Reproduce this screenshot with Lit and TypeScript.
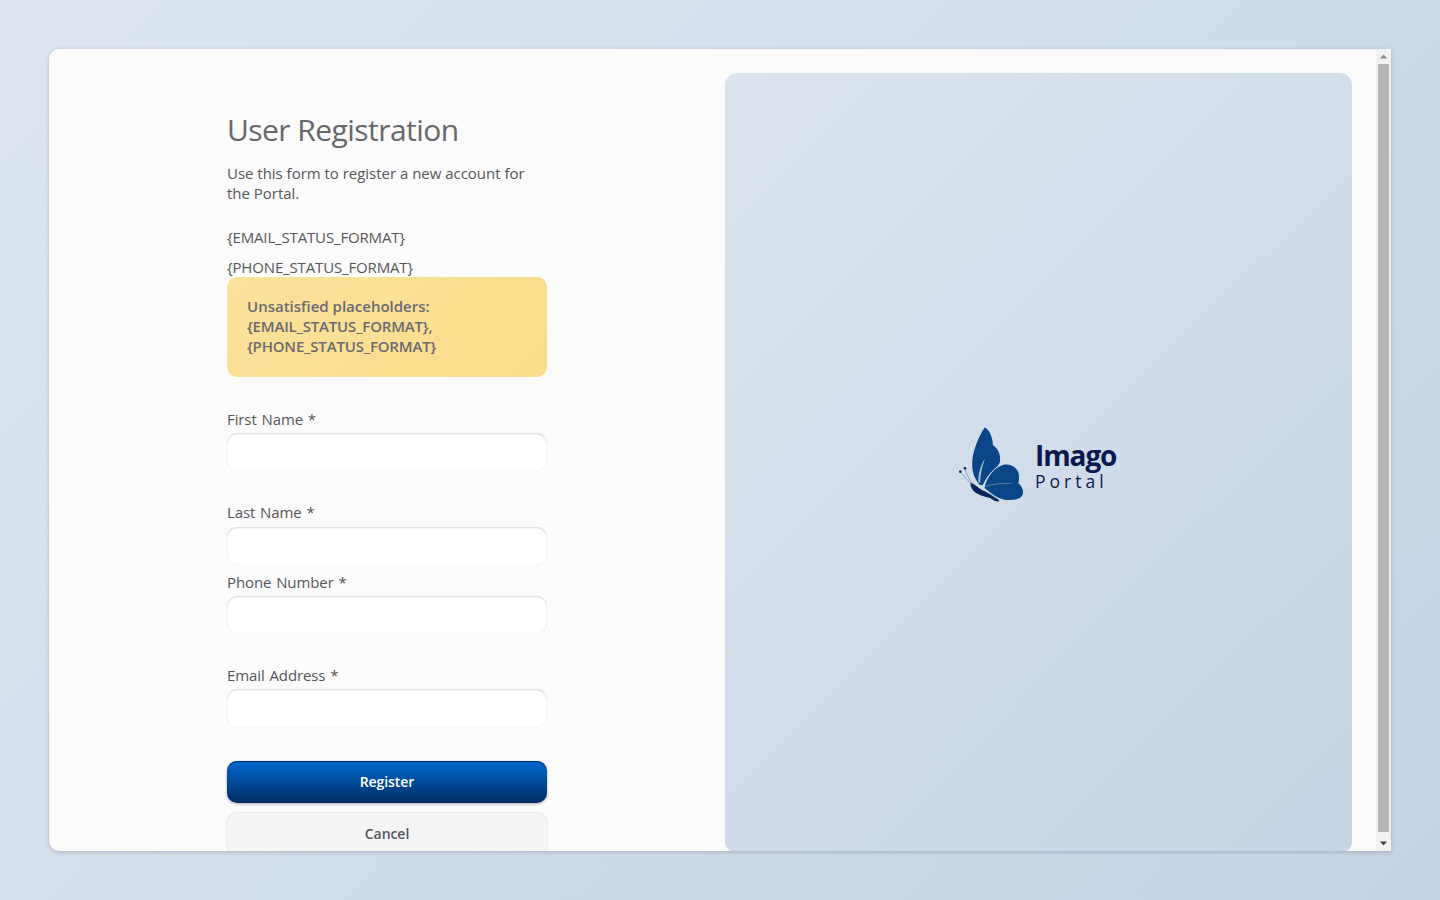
import { LitElement, html, css } from "lit";
import { customElement } from "lit/decorators.js";

@customElement("app-root")
export class AppRoot extends LitElement {
  static styles = css`
    :host {
      display: block;
      width: 1440px;
      height: 900px;
      overflow: hidden;
      font-family: "Open Sans", "Noto Sans", sans-serif;
      background: linear-gradient(135deg, #dde6ef 0%, #d0ddea 50%, #c5d4e5 100%);
      padding: 49px;
      box-sizing: border-box;
    }
    .card {
      height: 802px;
      width: 1342px;
      display: flex;
      background: #fbfbfb;
      border-radius: 10px 0 0 10px;
      box-shadow: 0 1px 4px rgba(60, 70, 90, 0.28);
      overflow: hidden;
    }
    .content {
      flex: 1;
      min-width: 0;
      display: flex;
      overflow: hidden;
    }
    .left {
      width: 676px;
      flex: none;
      padding: 60px 0 0 178px;
      box-sizing: border-box;
    }
    .form {
      width: 320px;
      display: flex;
      flex-direction: column;
    }
    h1 {
      margin: 0;
      font-size: 30px;
      line-height: 42px;
      font-weight: 400;
      letter-spacing: -0.55px;
      color: #66676b;
    }
    .intro {
      margin: 12px 0 0;
      font-size: 15px;
      line-height: 20px;
      letter-spacing: -0.02px;
      color: #55565a;
    }
    .status {
      font-size: 15px;
      line-height: 20px;
      letter-spacing: -0.15px;
      color: #55565a;
      margin: 24px 0 0;
    }
    .status + .status {
      margin-top: 10px;
    }
    .alert {
      height: 100px;
      box-sizing: border-box;
      padding: 19px 20px 21px;
      border-radius: 10px;
      background: linear-gradient(135deg, #fae29b 0%, #fadd8a 100%);
      font-size: 15px;
      line-height: 20px;
      font-weight: 600;
      color: #6b6a72;
    }
    .ph {
      letter-spacing: -0.18px;
    }
    .field {
      display: flex;
      flex-direction: column;
    }
    .field label {
      font-size: 15px;
      line-height: 20px;
      letter-spacing: -0.1px;
      word-spacing: 1px;
      color: #55565a;
    }
    .field .box {
      margin-top: 4px;
      height: 37px;
      box-sizing: border-box;
      background: #fff;
      border-radius: 10px;
      box-shadow: inset 0 1px 2px rgba(0, 0, 0, 0.16), 0 0 1px rgba(0, 0, 0, 0.1);
      border: none;
      padding: 0 12px;
      font: inherit;
    }
    .first { margin-top: 32px; }
    .last { margin-top: 32px; }
    .last .box { margin-top: 5px; }
    .phone { margin-top: 8px; }
    .email { margin-top: 32px; }
    .email .box { height: 38px; }
    button {
      display: block;
      width: 320px;
      border: none;
      border-radius: 10px;
      font-family: inherit;
      font-size: 14px;
      font-weight: 600;
      flex: none;
      padding: 0 0 2px;
    }
    .register {
      margin-top: 34px;
      height: 42px;
      color: #fff;
      letter-spacing: -0.05px;
      background: linear-gradient(180deg, #0068cf 0%, #004a99 50%, #002d62 100%);
      box-shadow: inset 0 1px 0 rgba(0, 30, 80, 0.8), 0 1px 3px rgba(0, 0, 0, 0.3);
    }
    .cancel {
      margin-top: 10px;
      height: 42px;
      color: #55565a;
      letter-spacing: -0.05px;
      background: #f4f4f4;
      box-shadow: 0 0 2px rgba(0, 0, 0, 0.24);
    }
    .panel {
      width: 627px;
      height: 780px;
      flex: none;
      margin-top: 24px;
      border-radius: 12px;
      background: linear-gradient(135deg, #dbe4ee 0%, #c6d5e5 100%);
      display: flex;
      align-items: center;
      justify-content: center;
    }
    .logo {
      display: flex;
      align-items: center;
      gap: 9px;
      margin-top: 4px;
    }
    .logo svg {
      display: block;
      width: 68px;
      height: 78px;
    }
    .logo-text {
      display: flex;
      flex-direction: column;
      width: 84px;
      margin-top: 1px;
    }
    .imago {
      font-size: 28px;
      line-height: 30px;
      margin-top: 3px;
      font-weight: 700;
      letter-spacing: -1.1px;
      color: #0a1a4c;
    }
    .portal {
      font-size: 17.5px;
      line-height: 25px;
      margin-top: -1.5px;
      font-weight: 500;
      letter-spacing: 4px;
      color: #0a1a4c;
    }
    .scrollbar {
      width: 15px;
      flex: none;
      display: flex;
      flex-direction: column;
      align-items: center;
      background: #f1f1f1;
    }
    .arrow {
      width: 15px;
      height: 15px;
      flex: none;
      display: block;
    }
    .thumb {
      width: 11px;
      height: 768px;
      margin-bottom: 2px;
      background: #b6b6b6;
      flex: none;
    }
    .spacer { flex: 1; }
  `;

  render() {
    return html`
      <div class="card">
        <div class="content">
          <div class="left">
            <div class="form">
              <h1>User Registration</h1>
              <p class="intro">Use this form to register a new account for the Portal.</p>
              <div class="status">{EMAIL_STATUS_FORMAT}</div>
              <div class="status">{PHONE_STATUS_FORMAT}</div>
              <div class="alert">Unsatisfied placeholders: <span class="ph">{EMAIL_STATUS_FORMAT},</span> <span class="ph">{PHONE_STATUS_FORMAT}</span></div>
              <div class="field first"><label>First Name *</label><input class="box" /></div>
              <div class="field last"><label>Last Name *</label><input class="box" /></div>
              <div class="field phone"><label>Phone Number *</label><input class="box" /></div>
              <div class="field email"><label>Email Address *</label><input class="box" /></div>
              <button class="register">Register</button>
              <button class="cancel">Cancel</button>
            </div>
          </div>
          <div class="panel">
            <div class="logo">
              <svg viewBox="24 18 204 234" aria-hidden="true">
                <path fill="#0a4587" d="M88 194C70 172 63 146 68 112C73 82 88 45 105 22C119 32 128 52 129 76C144 86 153 104 150 124C148 136 140 141 130 150C116 162 106 178 98 196Z" />
                <path fill="#0a4587" d="M104 200C112 172 130 144 158 135C182 130 200 142 206 160C208 172 207 184 205 190C216 198 222 212 218 224C212 238 192 240 172 240C150 238 134 230 104 204Z" />
                <path fill="#a9bfd8" d="M85 186C85 160 91 136 105 116C96 140 91 164 90 190Z" />
                <path fill="none" stroke="#a9bfd8" stroke-width="1.4" stroke-linecap="round" d="M106 199C130 192 158 189 184 190" />
                <path fill="#0a2657" d="M62 188C72 190 84 202 96 210C110 216 124 224 134 232C142 236 148 240 148 244C140 246 128 240 120 234C106 230 82 224 70 212C64 204 60 196 62 188Z" />
                <path fill="none" stroke="#5a7398" stroke-width="1.6" d="M66 194C56 186 44 170 32 157" />
                <path fill="none" stroke="#5a7398" stroke-width="1.6" d="M68 192C58 178 50 164 46 150" />
                <circle cx="31" cy="155" r="4" fill="#0a2657" />
                <circle cx="45" cy="145" r="4" fill="#0a2657" />
              </svg>
              <div class="logo-text">
                <span class="imago">Imago</span>
                <span class="portal">Portal</span>
              </div>
            </div>
          </div>
        </div>
        <div class="scrollbar">
          <svg class="arrow" viewBox="0 0 15 15"><path d="M4 9.5L7.5 5.5L11 9.5Z" fill="#8a8a8a" /></svg>
          <div class="thumb"></div>
          <div class="spacer"></div>
          <svg class="arrow" viewBox="0 0 15 15"><path d="M4 5.5L11 5.5L7.5 9.5Z" fill="#444" /></svg>
        </div>
      </div>
    `;
  }
}
